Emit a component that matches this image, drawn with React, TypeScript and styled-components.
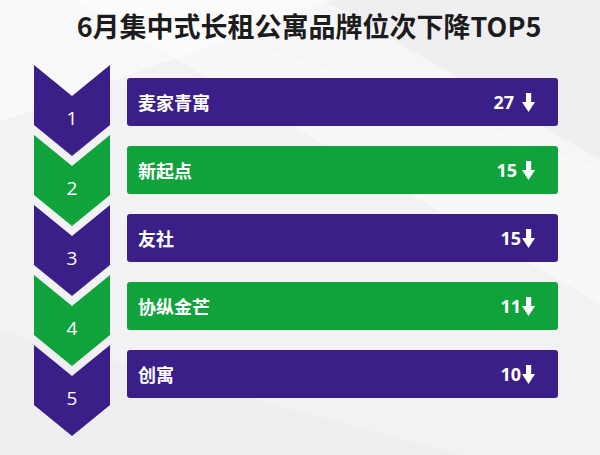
import React from "react";
import styled, { createGlobalStyle } from "styled-components";

const PURPLE = "#3b1f88";
const GREEN = "#10a33c";

const Global = createGlobalStyle`
  html, body { margin: 0; padding: 0; }
  body {
    width: 600px;
    height: 455px;
    overflow: hidden;
    font-family: "Noto Sans CJK SC", "Noto Sans", sans-serif;
    background-color: #f2f2f4;
    background-image:
      linear-gradient(160deg, rgba(255,255,255,0.5) 0 18%, transparent 18.2%),
      linear-gradient(30deg, transparent 0 62%, rgba(255,255,255,0.45) 62.2% 80%, transparent 80.2%),
      linear-gradient(200deg, rgba(236,236,240,0.5) 0 25%, transparent 25.2%),
      linear-gradient(15deg, rgba(236,236,239,0.6) 0 20%, transparent 20.2%);
  }
`;

const Page = styled.div`
  width: 600px;
  height: 455px;
  display: flex;
  flex-direction: column;
  box-sizing: border-box;
`;

const Title = styled.h1`
  margin: 11px 0 0 0;
  padding-left: 18px;
  font-size: 27px;
  line-height: 30px;
  font-weight: 700;
  color: #1c1c1c;
  text-align: center;
  letter-spacing: 0;
`;

const Body = styled.div`
  display: flex;
  flex-direction: row;
  align-items: flex-start;
  padding-left: 34px;
  margin-top: 24px;
`;

const ChevronColumn = styled.div`
  display: flex;
  flex-direction: column;
  width: 76px;
`;

const Chevron = styled.div<{ $color: string }>`
  width: 76px;
  height: 91px;
  background: ${(p) => p.$color};
  clip-path: polygon(0 0, 50% 31px, 100% 0, 100% 60px, 50% 100%, 0 60px);
  box-sizing: border-box;
  padding-top: 43px;
  text-align: center;
  color: #ffffff;
  font-family: "Open Sans", "Noto Sans", sans-serif;
  font-size: 19px;
  line-height: 20px;
  font-weight: 400;
  & + & { margin-top: -21px; }
`;

const BarColumn = styled.div`
  display: flex;
  flex-direction: column;
  gap: 20px;
  margin-left: 17px;
  margin-top: 13px;
  width: 431px;
`;

const Bar = styled.div<{ $color: string }>`
  height: 48px;
  border-radius: 3px;
  background: ${(p) => p.$color};
  display: flex;
  align-items: center;
  justify-content: space-between;
  padding: 0 23px 0 11px;
  color: #ffffff;
`;

const Name = styled.span`
  font-size: 18px;
  font-weight: 700;
  line-height: 20px;
`;

const Change = styled.span<{ $gap: number }>`
  display: flex;
  align-items: center;
  gap: ${(p) => p.$gap}px;
  font-family: "Open Sans", "Noto Sans", sans-serif;
  font-size: 18px;
  font-weight: 700;
  line-height: 20px;
`;

const ArrowSvg = styled.svg`
  display: block;
  width: 13px;
  height: 19px;
  margin-top: 1px;
`;

const DownArrow = () => (
  <ArrowSvg viewBox="0 0 13 19">
    <rect x="4" y="0" width="5.2" height="10" fill="#ffffff" />
    <polygon points="0,9 13,9 6.5,19" fill="#ffffff" />
  </ArrowSvg>
);

const rows = [
  { n: 1, name: "麦家青寓", value: 27, color: PURPLE, gap: 8 },
  { n: 2, name: "新起点", value: 15, color: GREEN, gap: 5 },
  { n: 3, name: "友社", value: 15, color: PURPLE, gap: 1 },
  { n: 4, name: "协纵金芒", value: 11, color: GREEN, gap: 1 },
  { n: 5, name: "创寓", value: 10, color: PURPLE, gap: 1 },
];

export default function App() {
  return (
    <Page>
      <Global />
      <Title>6月集中式长租公寓品牌位次下降TOP5</Title>
      <Body>
        <ChevronColumn>
          {rows.map((r) => (
            <Chevron key={r.n} $color={r.color}>
              {r.n}
            </Chevron>
          ))}
        </ChevronColumn>
        <BarColumn>
          {rows.map((r) => (
            <Bar key={r.n} $color={r.color}>
              <Name>{r.name}</Name>
              <Change $gap={r.gap}>
                {r.value}
                <DownArrow />
              </Change>
            </Bar>
          ))}
        </BarColumn>
      </Body>
    </Page>
  );
}
